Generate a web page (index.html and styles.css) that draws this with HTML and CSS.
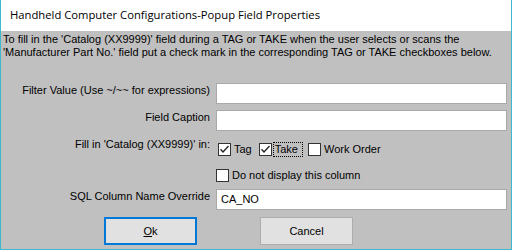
FILE: index.html
```html
<!DOCTYPE html>
<html lang="en">
<head>
    <meta charset="UTF-8">
    <title>Popup Field Properties</title>
    <link rel="stylesheet" href="styles.css">
</head>
<body>
    <div class="window">
        <div class="titlebar">Handheld Computer Configurations-Popup Field Properties</div>
        <div class="content">
            <p class="intro">To fill in the 'Catalog (XX9999)' field during a TAG or TAKE when the user selects or scans the<br>'Manufacturer Part No.' field put a check mark in the corresponding TAG or TAKE checkboxes below.</p>

            <div class="form">
                <div class="lbl">Filter Value (Use ~/~~ for expressions)</div>
                <div class="field"></div>

                <div class="lbl">Field Caption</div>
                <div class="field"></div>

                <div class="lbl">Fill in 'Catalog (XX9999)' in:</div>
                <div class="checks">
                    <span class="chk">
                        <span class="box"><svg width="11" height="11" viewBox="0 0 11 11"><path d="M1.5 5.2 L4 8 L9.5 2" fill="none" stroke="#222" stroke-width="1.3"/></svg></span>
                        <span class="chk-text">Tag</span>
                    </span>
                    <span class="chk">
                        <span class="box"><svg width="11" height="11" viewBox="0 0 11 11"><path d="M1.5 5.2 L4 8 L9.5 2" fill="none" stroke="#222" stroke-width="1.3"/></svg></span>
                        <span class="chk-text focus">Take</span>
                    </span>
                    <span class="chk">
                        <span class="box"></span>
                        <span class="chk-text">Work Order</span>
                    </span>
                </div>

                <div class="lbl"></div>
                <div class="checks single">
                    <span class="chk">
                        <span class="box"></span>
                        <span class="chk-text">Do not display this column</span>
                    </span>
                </div>

                <div class="lbl">SQL Column Name Override</div>
                <div class="field">CA_NO</div>
            </div>

            <div class="buttons">
                <button class="btn default"><u>O</u>k</button>
                <button class="btn">Cancel</button>
            </div>
        </div>
    </div>
</body>
</html>
```
FILE: styles.css
```css
* {
    margin: 0;
    padding: 0;
    box-sizing: border-box;
}
body {
    background: #fff;
}
.window {
    width: 512px;
    height: 250px;
    border: 1px solid #3cb9cc;
    border-top: none;
    background-color: #c0c0c0;
    display: flex;
    flex-direction: column;
}
.titlebar {
    height: 31px;
    background: #fff;
    font: 11.25px "Open Sans", "Noto Sans", sans-serif;
    color: #000;
    padding: 7px 0 0 9px;
}
.content {
    flex: 1;
    padding: 2px 4px 0 2px;
    font: 11px "Liberation Sans", Arial, sans-serif;
    color: #000;
}
.intro {
    line-height: 13px;
}
.form {
    margin-top: 24px;
    display: grid;
    grid-template-columns: 207px 291px;
    grid-template-rows: 21px 21px 24px 16px 21px;
    column-gap: 6px;
    row-gap: 6px;
}
.lbl {
    text-align: right;
    line-height: 13px;
    padding-top: 1px;
}
.field {
    background: #fff;
    border: 1px solid #a9a9a9;
    padding-left: 4px;
    line-height: 19px;
}
.checks {
    display: flex;
    align-items: center;
    padding-left: 2px;
    gap: 5px;
}
.checks.single {
    padding-left: 0;
}
.chk {
    display: flex;
    align-items: center;
}
.box {
    width: 13px;
    height: 13px;
    border: 1px solid #333;
    background: #fff;
    display: flex;
}
.chk-text {
    margin-left: 1px;
    line-height: 13px;
    padding: 0 1px;
    border: 1px solid transparent;
}
.chk-text.focus {
    padding-right: 4px;
    border: 1px dotted #000;
}
.buttons {
    display: flex;
    gap: 63px;
    margin: 7px 0 0 101px;
}
.btn {
    width: 93px;
    height: 28px;
    background: #e1e1e1;
    border: 1px solid #adadad;
    font: 11px "Liberation Sans", Arial, sans-serif;
    color: #000;
}
.btn.default {
    border: 2px solid #0078d7;
}
```
